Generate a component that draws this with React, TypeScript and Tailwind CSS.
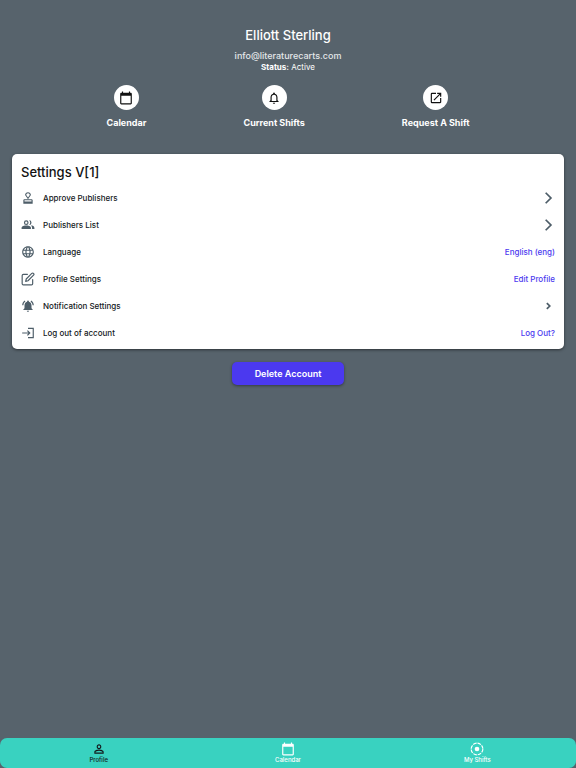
import type { ReactNode } from "react";
import {
    MdCalendarToday,
    MdLanguage,
    MdNotificationsActive,
    MdOpenInNew,
    MdOutlineApproval,
    MdOutlineNotifications,
    MdPersonOutline,
} from "react-icons/md";
import { FiEdit } from "react-icons/fi";

function PeopleIcon() {
    return (
        <svg className="size-[14px]" viewBox="0 0 24 24" fill="currentColor">
            <circle cx="9" cy="8" r="3" fill="none" stroke="currentColor" strokeWidth="2" />
            <path d="M14 4a4 4 0 1 1 0 8a6 6 0 0 0 0-8z" />
            <path d="M1 19v-2c0-3 5-4 8-4s8 1 8 4v2z" />
            <path d="M17 13c3 0 6 1 6 4v2h-4v-2c0-2-1-3-2-4z" />
        </svg>
    );
}

function LogOutIcon() {
    return (
        <svg className="size-[14px]" viewBox="0 0 24 24" fill="none" stroke="currentColor" strokeWidth="2">
            <path d="M12 4h9v16h-9M2 12h13M11 8l4 4-4 4" />
        </svg>
    );
}

function ChevronIcon({ small }: { small?: boolean }) {
    return (
        <svg className="size-[14px]" viewBox="0 0 24 24" fill="none" stroke="currentColor" strokeWidth="3">
            <path d={small ? "M10 7l5 5-5 5" : "M8 3l9 9-9 9"} />
        </svg>
    );
}

function ShiftsIcon() {
    return (
        <svg className="size-[14px]" viewBox="0 0 24 24" fill="none" stroke="currentColor" strokeWidth="2">
            <circle cx="12" cy="12" r="10" pathLength="80" strokeDasharray="8 2" />
            <circle cx="12" cy="12" r="4" fill="currentColor" stroke="none" />
        </svg>
    );
}

function Action({ icon, label }: { icon: ReactNode; label: string }) {
    return (
        <button className="flex flex-col items-center gap-[6px] text-[9px] leading-[14px] font-bold text-white">
            <span className="flex size-[25px] items-center justify-center rounded-full bg-white text-[#111]">
                {icon}
            </span>
            {label}
        </button>
    );
}

function Row({ icon, label, children }: { icon: ReactNode; label: string; children: ReactNode }) {
    return (
        <li className="flex h-[27px] items-center justify-between">
            <div className="flex items-center gap-2">
                <span className="flex w-[14px] justify-center text-[#4d5d68]">{icon}</span>
                <span>{label}</span>
            </div>
            {children}
        </li>
    );
}

function Tab({ icon, label, active }: { icon: ReactNode; label: string; active?: boolean }) {
    return (
        <a
            href="#"
            className={`flex flex-1 flex-col items-center text-[6px] leading-[8px] font-medium ${active ? "text-[#14181b]" : "text-white"}`}
        >
            <span className="flex h-[14px] items-center">{icon}</span>
            {label}
        </a>
    );
}

export default function App() {
    return (
        <div className="flex min-h-screen flex-col bg-[#57636c] font-['Inter','Liberation_Sans',sans-serif]">
            <main className="flex flex-1 flex-col items-center px-3 pt-[26px]">
                <h1 className="text-[13px] leading-[18px] font-medium text-white">Elliott Sterling</h1>
                <p className="mt-[6px] text-[9px] leading-[12px] font-medium text-[#e4e7e9]">info@literaturecarts.com</p>
                <p className="text-[8px] leading-[10px] text-white">
                    <b>Status:</b> Active
                </p>

                <div className="mt-[13px] flex w-5/6 justify-around">
                    <Action icon={<MdCalendarToday className="size-[14px]" />} label="Calendar" />
                    <Action icon={<MdOutlineNotifications className="size-[14px]" />} label="Current Shifts" />
                    <Action icon={<MdOpenInNew className="size-[14px]" />} label="Request A Shift" />
                </div>

                <section className="mt-[24px] w-full rounded-[5px] bg-white px-[9px] pt-[9px] pb-[3px] shadow-[0_1px_3px_rgba(0,0,0,0.5)]">
                    <h2 className="text-[13px] leading-[18px] font-medium text-[#111]">Settings V[1]</h2>
                    <ul className="mt-[3px] text-[8px] leading-[12px] font-medium text-[#14181b]">
                        <Row icon={<MdOutlineApproval className="size-[14px]" />} label="Approve Publishers">
                            <button aria-label="Approve publishers" className="text-[#4d5d68]">
                                <ChevronIcon />
                            </button>
                        </Row>
                        <Row icon={<PeopleIcon />} label="Publishers List">
                            <button aria-label="Publishers list" className="text-[#4d5d68]">
                                <ChevronIcon />
                            </button>
                        </Row>
                        <Row icon={<MdLanguage className="size-[14px]" />} label="Language">
                            <a href="#" className="text-[#4b39ef]">English (eng)</a>
                        </Row>
                        <Row icon={<FiEdit className="size-[14px]" />} label="Profile Settings">
                            <a href="#" className="text-[#4b39ef]">Edit Profile</a>
                        </Row>
                        <Row icon={<MdNotificationsActive className="size-[14px]" />} label="Notification Settings">
                            <button aria-label="Notification settings" className="text-[#4d5d68]">
                                <ChevronIcon small />
                            </button>
                        </Row>
                        <Row icon={<LogOutIcon />} label="Log out of account">
                            <a href="#" className="text-[#4b39ef]">Log Out?</a>
                        </Row>
                    </ul>
                </section>

                <button className="mt-[13px] h-[23px] w-[112px] rounded-[5px] bg-[#4b39ef] text-[9px] font-semibold text-white shadow-[0_1px_3px_rgba(0,0,0,0.4)]">
                    Delete Account
                </button>
            </main>

            <nav className="flex h-[30px] rounded-[7px] bg-[#39d2c0] px-1 pt-[4px]">
                <Tab icon={<MdPersonOutline className="size-[14px]" />} label="Profile" active />
                <Tab icon={<MdCalendarToday className="size-[14px]" />} label="Calendar" />
                <Tab icon={<ShiftsIcon />} label="My Shifts" />
            </nav>
        </div>
    );
}
